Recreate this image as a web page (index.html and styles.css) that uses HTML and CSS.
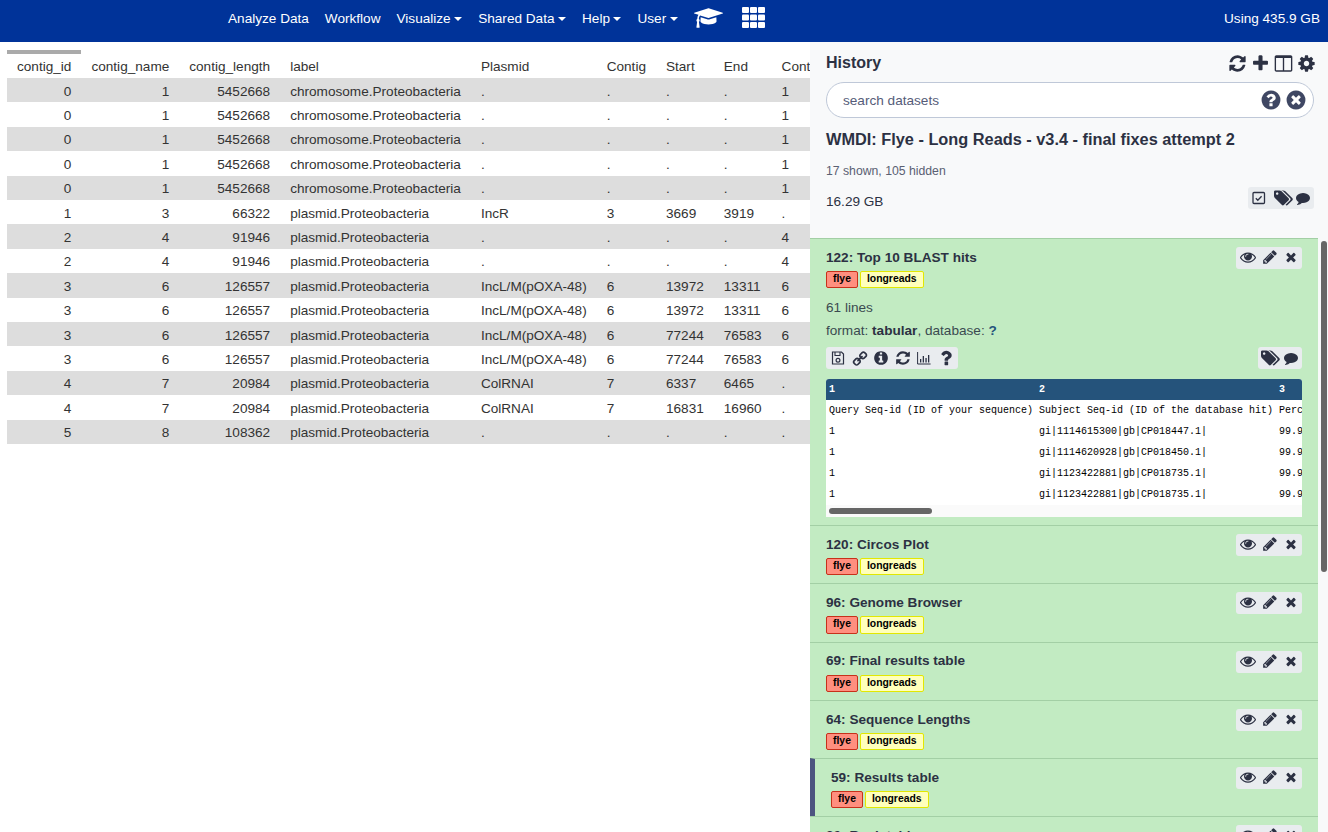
FILE: index.html
```html
<!DOCTYPE html>
<html lang="en">

<head>
  <meta charset="UTF-8" />
  <meta name="viewport" content="width=device-width, initial-scale=1.0" />
  <title>Galaxy</title>
  <link rel="stylesheet" href="styles.css">
</head>

<body>
  <!-- icon set, used below with <use> -->
  <svg class="icon-defs" xmlns="http://www.w3.org/2000/svg">
    <symbol id="i-refresh" viewBox="0 0 1792 1792"><path d="M1639 1056q0 5-1 7-64 268-268 434.500t-478 166.500q-146 0-282.500-55t-243.500-157l-129 129q-19 19-45 19t-45-19-19-45v-448q0-26 19-45t45-19h448q26 0 45 19t19 45-19 45l-137 137q71 66 161 102t187 36q134 0 250-65t186-179q11-17 53-117 8-23 30-23h192q13 0 22.500 9.500t9.500 22.500zm25-800v448q0 26-19 45t-45 19h-448q-26 0-45-19t-19-45 19-45l138-138q-148-137-349-137-134 0-250 65t-186 179q-11 17-53 117-8 23-30 23h-199q-13 0-22.500-9.500t-9.500-22.500v-7q65-268 270-434.500t480-166.500q146 0 284 55.500t245 156.500l130-129q19-19 45-19t45 19 19 45z"/></symbol>
    <symbol id="i-plus" viewBox="0 0 1792 1792"><path d="M1600 736v192q0 40-28 68t-68 28h-416v416q0 40-28 68t-68 28h-192q-40 0-68-28t-28-68v-416h-416q-40 0-68-28t-28-68v-192q0-40 28-68t68-28h416v-416q0-40 28-68t68-28h192q40 0 68 28t28 68v416h416q40 0 68 28t28 68z"/></symbol>
    <symbol id="i-columns" viewBox="0 0 1792 1792"><path d="M224 1536h608v-1152h-640v1120q0 13 9.500 22.500t22.500 9.500zm1376-32v-1120h-640v1152h608q13 0 22.500-9.500t9.500-22.500zm128-1216v1216q0 66-47 113t-113 47h-1344q-66 0-113-47t-47-113v-1216q0-66 47-113t113-47h1344q66 0 113 47t47 113z"/></symbol>
    <symbol id="i-cog" viewBox="0 0 1792 1792"><path d="M1152 896q0-106-75-181t-181-75-181 75-75 181 75 181 181 75 181-75 75-181zm512-109v222q0 12-8 23t-20 13l-185 28q-19 54-39 91 35 50 107 138 10 12 10 25t-9 23q-27 37-99 108t-94 71q-12 0-26-9l-138-108q-44 23-91 38-16 136-29 186-7 28-36 28h-222q-14 0-24.500-8.500t-11.500-21.500l-28-184q-49-16-90-37l-141 107q-10 9-25 9-14 0-25-11-126-114-165-168-7-10-7-23 0-12 8-23 15-21 51-66.500t54-70.500q-27-50-41-99l-183-27q-13-2-21-12.500t-8-23.500v-222q0-12 8-23t19-13l186-28q14-46 39-92-40-57-107-138-10-12-10-24 0-10 9-23 26-36 98.500-107.500t94.500-71.500q13 0 26 10l138 107q44-23 91-38 16-136 29-186 7-28 36-28h222q14 0 24.500 8.500t11.500 21.500l28 184q49 16 90 37l142-107q9-9 24-9 13 0 25 10 129 119 165 170 7 8 7 22 0 12-8 23-15 21-51 66.500t-54 70.500q26 50 41 98l183 28q13 2 21 12.500t8 23.500z"/></symbol>
    <symbol id="i-help" viewBox="0 0 1792 1792"><path d="M1024 1376v-192q0-14-9-23t-23-9h-192q-14 0-23 9t-9 23v192q0 14 9 23t23 9h192q14 0 23-9t9-23zm256-672q0-88-55.500-163t-138.500-116-170-41q-243 0-371 213-15 24 8 42l132 100q7 6 19 6 16 0 25-12 53-68 86-92 34-24 86-24 48 0 85.500 26t37.500 59q0 38-20 61t-68 45q-63 28-115.500 86.500t-52.500 125.500v36q0 14 9 23t23 9h192q14 0 23-9t9-23q0-19 21.500-49.500t54.500-49.500q32-18 49-28.500t46-35 44.500-48 28-60.500 12.500-81zm384 192q0 209-103 385.500t-279.500 279.500-385.500 103-385.500-103-279.500-279.500-103-385.500 103-385.500 279.500-279.500 385.500-103 385.500 103 279.500 279.500 103 385.500z"/></symbol>
    <symbol id="i-clear" viewBox="0 0 1792 1792"><path d="M1277 1122q0-26-19-45l-181-181 181-181q19-19 19-45 0-27-19-46l-90-90q-19-19-46-19-26 0-45 19l-181 181-181-181q-19-19-45-19-27 0-46 19l-90 90q-19 19-19 46 0 26 19 45l181 181-181 181q-19 19-19 45 0 27 19 46l90 90q19 19 46 19 26 0 45-19l181-181 181 181q19 19 45 19 27 0 46-19l90-90q19-19 19-46zm387-226q0 209-103 385.500t-279.500 279.500-385.500 103-385.500-103-279.500-279.500-103-385.500 103-385.500 279.500-279.500 385.500-103 385.500 103 279.500 279.500 103 385.500z"/></symbol>
    <symbol id="i-info" viewBox="0 0 1792 1792"><path d="M1152 1376v-160q0-14-9-23t-23-9h-96v-512q0-14-9-23t-23-9h-320q-14 0-23 9t-9 23v160q0 14 9 23t23 9h96v320h-96q-14 0-23 9t-9 23v160q0 14 9 23t23 9h448q14 0 23-9t9-23zm-128-896v-160q0-14-9-23t-23-9h-192q-14 0-23 9t-9 23v160q0 14 9 23t23 9h192q14 0 23-9t9-23zm640 416q0 209-103 385.500t-279.500 279.500-385.500 103-385.500-103-279.500-279.500-103-385.500 103-385.500 279.500-279.500 385.500-103 385.500 103 279.500 279.500 103 385.500z"/></symbol>
    <symbol id="i-question" viewBox="0 0 1792 1792"><path d="M1088 1256v240q0 16-12 28t-28 12h-240q-16 0-28-12t-12-28v-240q0-16 12-28t28-12h240q16 0 28 12t12 28zm316-600q0 54-15.500 101t-35 76.500-55 59.500-57.500 43.500-61 35.500q-41 23-68.500 65t-27.500 67q0 17-12 32.500t-28 15.500h-240q-15 0-25.500-18.500t-10.500-37.500v-45q0-83 65-156.500t143-108.500q59-27 84-56t25-76q0-42-46.500-74t-107.500-32q-65 0-108 29-35 25-107 115-13 16-31 16-12 0-25-8l-164-125q-13-10-15.500-25t5.500-28q160-266 464-266 80 0 161 31t146 83 106 127.500 41 158.500z"/></symbol>
    <symbol id="i-eye" viewBox="0 0 1792 1792"><path d="M1664 960q-152-236-381-353 61 104 61 225 0 185-131.500 316.500t-316.500 131.500-316.500-131.500-131.500-316.500q0-121 61-225-229 117-381 353 133 205 333.500 326.500t434.500 121.500 434.500-121.500 333.500-326.500zm-720-384q0-20-14-34t-34-14q-125 0-214.500 89.500t-89.500 214.500q0 20 14 34t34 14 34-14 14-34q0-86 61-147t147-61q20 0 34-14t14-34zm848 384q0 34-20 69-140 230-376.500 368.500t-499.500 138.500-499.500-139-376.500-368q-20-35-20-69t20-69q140-229 376.500-368t499.500-139 499.500 139 376.500 368q20 35 20 69z"/></symbol>
    <symbol id="i-pencil" viewBox="0 0 1792 1792"><path d="M491 1536l91-91-235-235-91 91v107h128v128h107zm523-928q0-22-22-22-10 0-17 7l-542 542q-7 7-7 17 0 22 22 22 10 0 17-7l542-542q7-7 7-17zm-54-192l416 416-832 832h-416v-416zm683 96q0 53-37 90l-166 166-416-416 166-165q36-38 90-38 53 0 91 38l235 234q37 39 37 91z"/></symbol>
    <symbol id="i-times" viewBox="0 0 1792 1792"><path d="M1490 1322q0 40-28 68l-136 136q-28 28-68 28t-68-28l-294-294-294 294q-28 28-68 28t-68-28l-136-136q-28-28-28-68t28-68l294-294-294-294q-28-28-28-68t28-68l136-136q28-28 68-28t68 28l294 294 294-294q28-28 68-28t68 28l136 136q28 28 28 68t-28 68l-294 294 294 294q28 28 28 68z"/></symbol>
    <symbol id="i-tags" viewBox="0 0 1920 1792"><path d="M448 448q0-53-37.500-90.500t-90.500-37.500-90.500 37.500-37.500 90.500 37.500 90.500 90.500 37.500 90.500-37.500 37.500-90.500zm1067 576q0 53-37 90l-491 492q-39 37-91 37-53 0-90-37l-715-716q-38-37-64.500-101t-26.500-117v-416q0-52 38-90t90-38h416q53 0 117 26.500t102 64.500l715 714q37 39 37 91zm384 0q0 53-37 90l-491 492q-39 37-91 37-36 0-59-14t-53-45l470-470q37-37 37-90 0-52-37-91l-715-714q-38-38-102-64.500t-117-26.500h224q53 0 117 26.500t102 64.500l715 714q37 39 37 91z"/></symbol>
    <symbol id="i-comment" viewBox="-128 -128 2048 2048"><path d="M1792 896q0 174-120 321.500t-326 233-450 85.500q-70 0-145-8-198 175-460 242-49 14-114 22-17 2-30.500-9t-17.500-29v-1q-3-4-.5-12t2-10 4.500-9.500l6-9 7-8.500 8-9q7-8 31-34.500t34.500-38 31-39.500 32.500-51 27-59 26-76q-157-89-247.500-220t-90.500-281q0-130 71-248.500t191-204.500 286-136.500 348-50.500q244 0 450 85.500t326 233 120 321.500z"/></symbol>
    <symbol id="i-link" viewBox="0 0 1792 1792"><path transform="matrix(1 0 0 -1 0 1792)" d="M1520 1216q0-40-28-68l-208-208q-28-28-68-28-42 0-72 32 3 3 19 18.500t21.500 21.500 15 19 13 25.500 3.500 27.500q0 40-28 68t-68 28q-15 0-27.500-3.500t-25.500-13-19-15-21.500-21.500-18.500-19q-33 31-33 73 0 40 28 68l206 207q27 27 68 27 40 0 68-26l147-146q28-28 28-67zm-703-705q0-40-28-68l-206-207q-28-28-68-28-39 0-68 27l-147 146q-28 28-28 67 0 40 28 68l208 208q27 27 68 27 42 0 72-31-3-3-19-18.500t-21.500-21.500-15-19-13-25.500-3.500-27.500q0-40 28-68t68-28q15 0 27.500 3.500t25.500 13 19 15 21.500 21.500 18.500 19q33-31 33-73zm895 705q0 120-85 203l-147 146q-83 83-203 83-121 0-204-85l-206-207q-83-83-83-203 0-123 88-209l-88-88q-86 88-208 88-120 0-204-84l-208-208q-84-84-84-204t85-203l147-146q83-83 203-83 121 0 204 85l206 207q83 83 83 203 0 123-88 209l88 88q86-88 208-88 120 0 204 84l208 208q84 84 84 204z"/></symbol>
    <symbol id="i-cap" viewBox="0 0 2304 1792"><path d="M1774 836l18 316q4 69-82 128t-235 93.500-323 34.500-323-34.500-235-93.500-82-128l18-316 574 181q22 7 48 7t48-7zm530-324q0 23-22 31l-1120 352q-4 1-10 1t-10-1l-652-206q-43 34-71 111.500t-34 178.500q63 36 63 109 0 69-58 107l58 433q2 14-8 25-9 11-24 11h-192q-15 0-24-11-10-11-8-25l58-433q-58-38-58-107 0-73 65-111 11-207 98-330l-333-104q-22-8-22-31t22-31l1120-352q4-1 10-1t10 1l1120 352q22 8 22 31z"/></symbol>
    <symbol id="i-grid" viewBox="0 0 23 21"><rect width="7" height="6" rx="1"/><rect x="8" width="7" height="6" rx="1"/><rect x="16" width="7" height="6" rx="1"/><rect y="7.500" width="7" height="6" rx="1"/><rect x="8" y="7.500" width="7" height="6" rx="1"/><rect x="16" y="7.500" width="7" height="6" rx="1"/><rect y="15" width="7" height="6" rx="1"/><rect x="8" y="15" width="7" height="6" rx="1"/><rect x="16" y="15" width="7" height="6" rx="1"/></symbol>
    <symbol id="i-check" viewBox="-1 -1 16 16"><rect x="1" y="1.500" width="11.500" height="11" rx="1" fill="none" stroke="currentColor" stroke-width="1.300"/><path d="M3.800 7.200l2 2 3.800-4" fill="none" stroke="currentColor" stroke-width="1.300"/></symbol>
    <symbol id="i-save" viewBox="-1 -1 16 16"><path d="M1.500 1h9l2 2v10h-11z" fill="none" stroke="currentColor" stroke-width="1.200"/><path d="M4 1v3.500h5V1" fill="none" stroke="currentColor" stroke-width="1.100"/><circle cx="7" cy="9.300" r="1.900" fill="none" stroke="currentColor" stroke-width="1.200"/></symbol>
    <symbol id="i-chart" viewBox="-1 -1 16 16"><path d="M.6 1v12h13" fill="none" stroke="currentColor" stroke-width="1"/><path d="M3 8h1.300v3.500H3zM5.700 5h1.300v6.500H5.700zM8.400 7h1.300v4.500H8.400zM11 4h1.300v7.500H11z"/></symbol>
  </svg>

  <nav class="navbar">
    <ul class="nav-list">
      <li>Analyze Data</li>
      <li>Workflow</li>
      <li class="caret">Visualize</li>
      <li class="caret">Shared Data</li>
      <li class="caret">Help</li>
      <li class="caret">User</li>
      <li><svg class="nav-cap"><use href="#i-cap"/></svg></li>
      <li><svg class="nav-grid"><use href="#i-grid"/></svg></li>
    </ul>
    <span class="quota">Using 435.9 GB</span>
  </nav>

  <div class="page">
    <main class="center">
      <table class="results">
        <thead>
          <tr>
            <th class="num sorted">contig_id</th>
            <th class="num">contig_name</th>
            <th class="num">contig_length</th>
            <th>label</th>
            <th>Plasmid</th>
            <th>Contig</th>
            <th>Start</th>
            <th>End</th>
            <th>Contig_id</th>
          </tr>
        </thead>
        <tbody>
          <tr><td class="num">0</td><td class="num">1</td><td class="num">5452668</td><td>chromosome.Proteobacteria</td><td>.</td><td>.</td><td>.</td><td>.</td><td>1</td></tr>
          <tr><td class="num">0</td><td class="num">1</td><td class="num">5452668</td><td>chromosome.Proteobacteria</td><td>.</td><td>.</td><td>.</td><td>.</td><td>1</td></tr>
          <tr><td class="num">0</td><td class="num">1</td><td class="num">5452668</td><td>chromosome.Proteobacteria</td><td>.</td><td>.</td><td>.</td><td>.</td><td>1</td></tr>
          <tr><td class="num">0</td><td class="num">1</td><td class="num">5452668</td><td>chromosome.Proteobacteria</td><td>.</td><td>.</td><td>.</td><td>.</td><td>1</td></tr>
          <tr><td class="num">0</td><td class="num">1</td><td class="num">5452668</td><td>chromosome.Proteobacteria</td><td>.</td><td>.</td><td>.</td><td>.</td><td>1</td></tr>
          <tr><td class="num">1</td><td class="num">3</td><td class="num">66322</td><td>plasmid.Proteobacteria</td><td>IncR</td><td>3</td><td>3669</td><td>3919</td><td>.</td></tr>
          <tr><td class="num">2</td><td class="num">4</td><td class="num">91946</td><td>plasmid.Proteobacteria</td><td>.</td><td>.</td><td>.</td><td>.</td><td>4</td></tr>
          <tr><td class="num">2</td><td class="num">4</td><td class="num">91946</td><td>plasmid.Proteobacteria</td><td>.</td><td>.</td><td>.</td><td>.</td><td>4</td></tr>
          <tr><td class="num">3</td><td class="num">6</td><td class="num">126557</td><td>plasmid.Proteobacteria</td><td>IncL/M(pOXA-48)</td><td>6</td><td>13972</td><td>13311</td><td>6</td></tr>
          <tr><td class="num">3</td><td class="num">6</td><td class="num">126557</td><td>plasmid.Proteobacteria</td><td>IncL/M(pOXA-48)</td><td>6</td><td>13972</td><td>13311</td><td>6</td></tr>
          <tr><td class="num">3</td><td class="num">6</td><td class="num">126557</td><td>plasmid.Proteobacteria</td><td>IncL/M(pOXA-48)</td><td>6</td><td>77244</td><td>76583</td><td>6</td></tr>
          <tr><td class="num">3</td><td class="num">6</td><td class="num">126557</td><td>plasmid.Proteobacteria</td><td>IncL/M(pOXA-48)</td><td>6</td><td>77244</td><td>76583</td><td>6</td></tr>
          <tr><td class="num">4</td><td class="num">7</td><td class="num">20984</td><td>plasmid.Proteobacteria</td><td>ColRNAI</td><td>7</td><td>6337</td><td>6465</td><td>.</td></tr>
          <tr><td class="num">4</td><td class="num">7</td><td class="num">20984</td><td>plasmid.Proteobacteria</td><td>ColRNAI</td><td>7</td><td>16831</td><td>16960</td><td>.</td></tr>
          <tr><td class="num">5</td><td class="num">8</td><td class="num">108362</td><td>plasmid.Proteobacteria</td><td>.</td><td>.</td><td>.</td><td>.</td><td>.</td></tr>
        </tbody>
      </table>
    </main>

    <aside class="history">
      <header class="history-top">
        <div class="history-title">
          <h2>History</h2>
          <div class="top-icons">
            <svg class="ic-19"><use href="#i-refresh"/></svg>
            <svg class="ic-19"><use href="#i-plus"/></svg>
            <svg class="ic-19"><use href="#i-columns"/></svg>
            <svg class="ic-19"><use href="#i-cog"/></svg>
          </div>
        </div>
        <div class="search">
          <span>search datasets</span>
          <svg class="ic-search"><use href="#i-help"/></svg>
          <svg class="ic-search"><use href="#i-clear"/></svg>
        </div>
        <h3 class="history-name">WMDI: Flye - Long Reads - v3.4 - final fixes attempt 2</h3>
        <p class="shown">17 shown, 105 hidden</p>
        <div class="size-row">
          <span>16.29 GB</span>
          <div class="btn-box">
            <svg class="ic-16"><use href="#i-check"/></svg>
            <svg class="ic-tags"><use href="#i-tags"/></svg>
            <svg class="ic-16"><use href="#i-comment"/></svg>
          </div>
        </div>
      </header>

      <div class="datasets">
        <section class="dataset">
          <div class="dataset-head">
            <h4>122: Top 10 BLAST hits</h4>
            <div class="btn-box"><svg class="ic-16"><use href="#i-eye"/></svg><svg class="ic-16"><use href="#i-pencil"/></svg><svg class="ic-14"><use href="#i-times"/></svg></div>
          </div>
          <div class="tags"><span class="tag tag-red">flye</span><span class="tag tag-yellow">longreads</span></div>
          <p class="lines">61 lines</p>
          <p class="format">format: <b>tabular</b>, database: <b class="db">?</b></p>
          <div class="dataset-actions">
            <div class="btn-box">
              <svg class="ic-16"><use href="#i-save"/></svg>
              <svg class="ic-16"><use href="#i-link"/></svg>
              <svg class="ic-16"><use href="#i-info"/></svg>
              <svg class="ic-16"><use href="#i-refresh"/></svg>
              <svg class="ic-16"><use href="#i-chart"/></svg>
              <svg class="ic-question"><use href="#i-question"/></svg>
            </div>
            <div class="btn-box">
              <svg class="ic-tags"><use href="#i-tags"/></svg>
              <svg class="ic-16"><use href="#i-comment"/></svg>
            </div>
          </div>
          <div class="peek">
            <table>
              <thead>
                <tr><th>1</th><th>2</th><th>3</th></tr>
              </thead>
              <tbody>
                <tr><td>Query Seq-id (ID of your sequence)</td><td>Subject Seq-id (ID of the database hit)</td><td>Percentage of identical matches</td></tr>
                <tr><td>1</td><td>gi|1114615300|gb|CP018447.1|</td><td>99.908</td></tr>
                <tr><td>1</td><td>gi|1114620928|gb|CP018450.1|</td><td>99.908</td></tr>
                <tr><td>1</td><td>gi|1123422881|gb|CP018735.1|</td><td>99.908</td></tr>
                <tr><td>1</td><td>gi|1123422881|gb|CP018735.1|</td><td>99.908</td></tr>
              </tbody>
            </table>
            <div class="peek-scroll"><div class="peek-thumb"></div></div>
          </div>
        </section>

        <section class="dataset">
          <div class="dataset-head">
            <h4>120: Circos Plot</h4>
            <div class="btn-box"><svg class="ic-16"><use href="#i-eye"/></svg><svg class="ic-16"><use href="#i-pencil"/></svg><svg class="ic-14"><use href="#i-times"/></svg></div>
          </div>
          <div class="tags"><span class="tag tag-red">flye</span><span class="tag tag-yellow">longreads</span></div>
        </section>

        <section class="dataset">
          <div class="dataset-head">
            <h4>96: Genome Browser</h4>
            <div class="btn-box"><svg class="ic-16"><use href="#i-eye"/></svg><svg class="ic-16"><use href="#i-pencil"/></svg><svg class="ic-14"><use href="#i-times"/></svg></div>
          </div>
          <div class="tags"><span class="tag tag-red">flye</span><span class="tag tag-yellow">longreads</span></div>
        </section>

        <section class="dataset">
          <div class="dataset-head">
            <h4>69: Final results table</h4>
            <div class="btn-box"><svg class="ic-16"><use href="#i-eye"/></svg><svg class="ic-16"><use href="#i-pencil"/></svg><svg class="ic-14"><use href="#i-times"/></svg></div>
          </div>
          <div class="tags"><span class="tag tag-red">flye</span><span class="tag tag-yellow">longreads</span></div>
        </section>

        <section class="dataset">
          <div class="dataset-head">
            <h4>64: Sequence Lengths</h4>
            <div class="btn-box"><svg class="ic-16"><use href="#i-eye"/></svg><svg class="ic-16"><use href="#i-pencil"/></svg><svg class="ic-14"><use href="#i-times"/></svg></div>
          </div>
          <div class="tags"><span class="tag tag-red">flye</span><span class="tag tag-yellow">longreads</span></div>
        </section>

        <section class="dataset dataset-current">
          <div class="dataset-head">
            <h4>59: Results table</h4>
            <div class="btn-box"><svg class="ic-16"><use href="#i-eye"/></svg><svg class="ic-16"><use href="#i-pencil"/></svg><svg class="ic-14"><use href="#i-times"/></svg></div>
          </div>
          <div class="tags"><span class="tag tag-red">flye</span><span class="tag tag-yellow">longreads</span></div>
        </section>

        <section class="dataset">
          <div class="dataset-head">
            <h4>30: Rank table</h4>
            <div class="btn-box"><svg class="ic-16"><use href="#i-eye"/></svg><svg class="ic-16"><use href="#i-pencil"/></svg><svg class="ic-14"><use href="#i-times"/></svg></div>
          </div>
          <div class="tags"><span class="tag tag-red">flye</span><span class="tag tag-yellow">longreads</span></div>
        </section>
      </div>

      <div class="history-thumb"></div>
    </aside>
  </div>
</body>

</html>
```

FILE: styles.css
```css
* {
  box-sizing: border-box;
}

html,
body {
  height: 100%;
}

body {
  margin: 0;
  display: flex;
  flex-direction: column;
  overflow: hidden;
  font-family: "Liberation Sans", Arial, sans-serif;
  font-size: 13.6px;
  line-height: 20.4px;
  color: #333;
  background: #fff;
}

.icon-defs {
  display: none;
}

/* top bar */
.navbar {
  flex: 0 0 42px;
  display: flex;
  justify-content: space-between;
  align-items: flex-start;
  padding: 9px 8px 0 220px;
  background: #003399;
  color: #fff;
}

.nav-list {
  margin: 0;
  padding: 0;
  list-style: none;
  display: flex;
}

.nav-list li {
  padding: 0 8px;
  display: flex;
  align-items: center;
  height: 20px;
}

.nav-list .caret::after {
  content: "";
  margin-left: 3.5px;
  border-top: 4px solid #fff;
  border-left: 4px solid transparent;
  border-right: 4px solid transparent;
}

.nav-cap {
  width: 29px;
  height: 24px;
  fill: #fff;
  margin-top: -2px;
}

.nav-grid {
  width: 23px;
  height: 21px;
  fill: #fff;
  margin: -4px 0 0 3px;
}

.quota {
  height: 20px;
}

/* main columns */
.page {
  flex: 1;
  min-height: 0;
  display: flex;
}

.center {
  flex: 0 0 810px;
  overflow: hidden;
  padding: 8px 0 0 7px;
}

.results {
  border-collapse: collapse;
  white-space: nowrap;
}

.results th {
  padding: 3px 10px 0.6px;
  font-weight: 400;
  text-align: left;
  border-top: 4px solid transparent;
}

.results th.sorted {
  border-top-color: #aaa;
}

.results td {
  padding: 3.5px 10px 0.5px;
}

.results .num {
  text-align: right;
}

.results tbody tr:nth-child(odd) {
  background: #ddd;
}

/* history panel */
.history {
  flex: 0 0 518px;
  min-width: 0;
  position: relative;
  display: flex;
  flex-direction: column;
  min-height: 0;
  background: #f8f9fa;
  color: #2c3143;
}

.history-top {
  flex: 0 0 196px;
  padding: 11px 14px 0 16px;
}

.history-title {
  display: flex;
  justify-content: space-between;
  align-items: center;
  height: 20px;
}

.history-title h2 {
  margin: 0;
  font-size: 16px;
  font-weight: 700;
}

.top-icons {
  display: flex;
  gap: 4px;
  margin-right: -1.5px;
}

.ic-19 {
  width: 19px;
  height: 19px;
  fill: #2c3143;
}

.search {
  margin-top: 9px;
  height: 36px;
  display: flex;
  align-items: center;
  gap: 2.5px;
  padding: 0 6.5px 0 16px;
  background: #fff;
  border: 1px solid #bfc8d8;
  border-radius: 18px;
  color: #555c78;
}

.search span {
  flex: 1;
  padding-top: 2px;
}

.ic-search {
  width: 22px;
  height: 22px;
  fill: #3f4763;
}

.history-name {
  margin: 11px 0 0;
  font-size: 16.320px;
  line-height: 20px;
  font-weight: 700;
}

.shown {
  margin: 13px 0 0;
  font-size: 12.240px;
  line-height: 18px;
  color: #5a6072;
}

.size-row {
  margin-top: 7px;
  display: flex;
  justify-content: space-between;
  align-items: flex-start;
}

.size-row span {
  margin-top: 5px;
}

.size-row .btn-box {
  width: 66px;
  padding: 0 3px;
  justify-content: space-between;
}

.size-row .ic-tags {
  margin-left: 2px;
  margin-right: -2px;
}

.btn-box {
  height: 22px;
  display: flex;
  align-items: center;
  padding: 0 4px;
  background: #e9ecef;
  border-radius: 3px;
  color: #2c3143;
  fill: #2c3143;
}

.ic-16 {
  width: 16px;
  height: 16px;
}

.ic-14 {
  width: 14px;
  height: 14px;
}

.ic-tags {
  width: 19px;
  height: 18px;
}

.ic-question {
  width: 20px;
  height: 20px;
  margin: 0 -2px;
}

/* dataset list */
.datasets {
  flex: 1;
  min-height: 0;
  overflow: hidden;
  margin-right: 10px;
}

.dataset {
  padding: 8px 16px 8px 16px;
  background: #c2ebc2;
  border-top: 1px solid #a3cfa5;
}

.dataset-current {
  border-left: 5px solid #4d5580;
}

.dataset-head {
  display: flex;
  justify-content: space-between;
  align-items: center;
}

.dataset-head h4 {
  margin: 0;
  font-size: 13.6px;
  font-weight: 700;
}

.dataset-head .btn-box {
  width: 66px;
  padding: 0 4px 0 3.5px;
  justify-content: space-between;
}

.dataset-head .btn-box svg {
  margin-top: -2px;
}

.tags {
  display: flex;
  gap: 2px;
  margin-top: 2px;
}

.tag {
  height: 17.250px;
  padding: 0 6px;
  font-size: 10.400px;
  line-height: 14px;
  font-weight: 700;
  color: #000;
  border: 1px solid;
  border-radius: 2px;
}

.tag-red {
  background: #ff8f7f;
  border-color: #c7301a;
}

.tag-yellow {
  background: #ffffbb;
  border-color: #e2e800;
}

.lines {
  margin: 9.500px 0 0;
  color: #3a4a50;
}

.format {
  margin: 2.600px 0 0;
  color: #3a4a50;
}

.format b {
  color: #2c3143;
}

.format .db {
  color: #25537b;
}

.dataset-actions {
  margin-top: 6px;
  display: flex;
  justify-content: space-between;
}

.dataset-actions .btn-box:first-child {
  width: 132px;
  justify-content: space-between;
}

.dataset-actions .btn-box:last-child {
  width: 44px;
  padding: 0 3px;
  justify-content: space-between;
}

/* peek table with scroll strip */
.peek {
  margin-top: 10px;
  background: #fff;
  overflow: hidden;
  border-radius: 3px 3px 0 0;
}

.peek table {
  border-collapse: collapse;
  white-space: nowrap;
  font-family: "Liberation Mono", monospace;
  font-size: 10px;
  line-height: 11px;
  color: #000;
}

.peek th {
  padding: 5px 3px;
  text-align: left;
  font-weight: 700;
  color: #fff;
  background: #25537b;
}

.peek td {
  padding: 5px 3px;
}

.peek-scroll {
  height: 12px;
  padding: 3px;
  background: #fafafa;
}

.peek-thumb {
  width: 103px;
  height: 6px;
  background: #666;
  border-radius: 3px;
}

.history-thumb {
  position: absolute;
  top: 199px;
  right: 1px;
  width: 6px;
  height: 331px;
  background: #666;
  border-radius: 3px;
}
```
